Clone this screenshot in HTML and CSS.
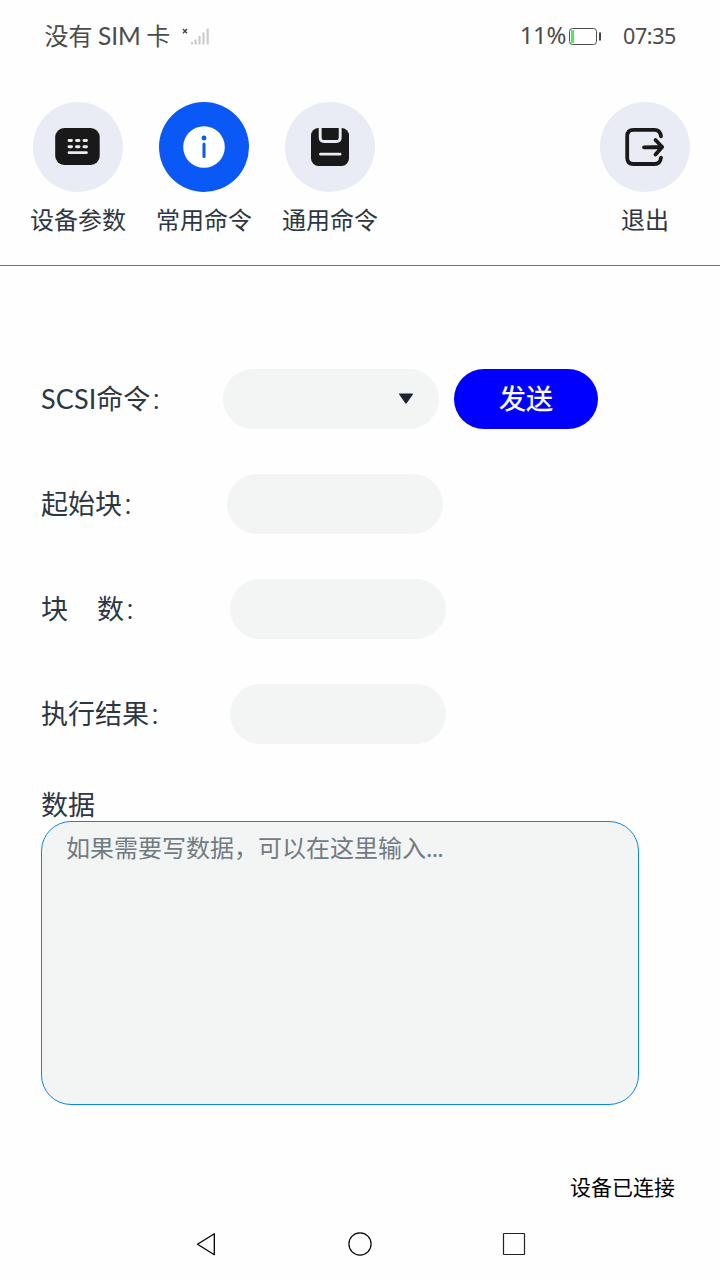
FILE: index.html
```
<!DOCTYPE html>
<html lang="zh-CN">
<head>
<meta charset="utf-8">
<title>常用命令</title>
<link rel="stylesheet" href="styles.css">
</head>
<body>
<div class="screen">
  <header class="status">
    <div class="carrier">没有 <span class="sim">SIM</span> 卡</div>
    <svg class="signal" width="29" height="20" viewBox="0 0 29 20">
      <path d="M1 2l4 4.200M5 2L1 6.200" stroke="#444" stroke-width="1.400"/>
      <path d="M10 15v2.500M13.600 12.500v5M17.500 9v8.500M21.500 5.500v12M25.700 1.500v16" stroke="#ccc" stroke-width="2.200"/>
    </svg>
    <div class="percent">11%</div>
    <svg class="battery" width="33" height="18" viewBox="0 0 33 18">
      <rect x=".5" y=".5" width="27" height="16" rx="3" fill="none" stroke="#4d4d4d"/>
      <path d="M2 2h3v13H2z" fill="#41ef5c"/>
      <path d="M31 4.500v8" stroke="#444" stroke-width="2"/>
    </svg>
    <time class="clock">07:35</time>
  </header>

  <nav class="tabs">
    <div class="tab">
      <div class="disc"><svg width="90" height="90" viewBox="0 0 90 90">
        <rect x="22.200" y="26" width="44.500" height="37" rx="9" fill="#191919"/>
        <path d="M36 38.500h2.500M43.500 38.500h2.500M51 38.500h2.500M36 44.700h2.500M43.500 44.700h2.500M51 44.700h2.500" stroke="#e9ecf5" stroke-width="2.900" stroke-linecap="round"/>
        <path d="M36 50.700h17.500" stroke="#e9ecf5" stroke-width="2.700" stroke-linecap="round"/>
      </svg></div>
      <span>设备参数</span>
    </div>
    <div class="tab active">
      <div class="disc"><svg width="90" height="90" viewBox="0 0 90 90">
        <circle cx="45" cy="45" r="20.800" fill="#fff"/>
        <circle cx="45" cy="36" r="2.400" fill="#0a59f7"/>
        <path d="M45 42v12.500" stroke="#0a59f7" stroke-width="3" stroke-linecap="round"/>
      </svg></div>
      <span>常用命令</span>
    </div>
    <div class="tab">
      <div class="disc"><svg width="90" height="90" viewBox="0 0 90 90">
        <rect x="26" y="26" width="38" height="38" rx="7.500" fill="#191919"/>
        <path d="M35.200 25.500v10q0 4 4 4h12q4 0 4-4v-10" fill="none" stroke="#e9ecf5" stroke-width="2.900"/>
        <path d="M35.500 52.200h19.500" stroke="#e9ecf5" stroke-width="2.800" stroke-linecap="round"/>
      </svg></div>
      <span>通用命令</span>
    </div>
    <div class="tab exit">
      <div class="disc"><svg width="90" height="90" viewBox="0 0 90 90" fill="none" stroke="#191919" stroke-width="3.800" stroke-linecap="round" stroke-linejoin="round">
        <path d="M61 34.300q-.8-6.500-6.500-6.500H33.500q-6.300 0-6.300 6.300v21.600q0 6.300 6.300 6.300h21q5.700 0 6.500-6.300"/>
        <path d="M44 45.300l18-.3M55.500 38l6.700 7-6.700 7.500"/>
      </svg></div>
      <span>退出</span>
    </div>
  </nav>

  <main class="form">
    <div class="row">
      <label class="label first"><span class="latin">SCSI</span>命令<span class="colon">：</span></label>
      <div class="field select"><svg width="16" height="11" viewBox="0 0 16 11"><path d="M1.500.5h13q1 0 .3 1L8.900 10q-.9 1-1.800 0L1.200 1.500q-.7-1 .3-1z" fill="#182431"/></svg></div>
      <button class="send">发送</button>
    </div>
    <div class="row"><label class="label second">起始块<span class="colon">：</span></label><div class="field"></div></div>
    <div class="row"><label class="label">块<span class="gap"></span>数<span class="colon">：</span></label><div class="field"></div></div>
    <div class="row"><label class="label">执行结果<span class="colon">：</span></label><div class="field"></div></div>
    <div class="data-label">数据</div>
    <div class="data">如果需要写数据，可以在这里输入<span class="dots">...</span></div>
  </main>

  <div class="connection">设备已连接</div>
  <footer class="navbar">
    <svg width="24" height="26" viewBox="0 0 24 26"><path d="M19.300 2.700v21L2.500 13.200z" fill="none" stroke="#000" stroke-width="1.300" stroke-linejoin="round"/></svg>
    <svg width="26" height="26" viewBox="0 0 26 26"><circle cx="13" cy="13" r="11.100" fill="none" stroke="#000" stroke-width="1.200"/></svg>
    <svg width="26" height="26" viewBox="0 0 26 26"><rect x="2.500" y="2.500" width="21" height="21" rx=".5" fill="none" stroke="#222" stroke-width="1.200"/></svg>
  </footer>
</div>
</body>
</html>
```
FILE: styles.css
```
* { box-sizing: border-box; }
body { margin: 0; background: #fefefe; font-family: "Noto Sans CJK SC", sans-serif; }
svg { display: block; flex: none; }
.screen { width: 720px; height: 1280px; display: flex; flex-direction: column; overflow: hidden; color: #2d3643; }
.status { height: 72px; display: flex; align-items: center; padding: 0 44px; color: #4b4b4b; font-size: 24px; line-height: 36px; white-space: nowrap; }
.carrier { width: 138px; margin-top: -2px; padding-left: .5px; }
.sim { font-family: Lato, sans-serif; font-size: 24.5px; }
.signal { margin-top: 1px; }
.percent { margin-left: auto; margin-right: 3px; margin-top: -2px; font-family: "Noto Sans", sans-serif; font-size: 24px; letter-spacing: -.4px; }
.battery { margin-top: 2px; }
.clock { width: 53px; margin-left: 21px; font-family: "Noto Sans", sans-serif; font-size: 21.5px; letter-spacing: -.4px; }
.tabs { height: 194px; padding: 30px 21px 0; display: flex; gap: 12px; border-bottom: 1px solid #767676; }
.tab { width: 114px; display: flex; flex-direction: column; align-items: center; font-size: 24px; line-height: 36px; white-space: nowrap; }
.tab span { margin-top: 9px; }
.disc { width: 90px; height: 90px; border-radius: 50%; background: #e9ecf5; }
.active .disc { background: #0a59f7; }
.exit { margin-left: auto; margin-right: -3px; }
.form { padding: 103px 81px 0 41px; font-size: 27px; }
.row { height: 60px; display: flex; align-items: center; margin-bottom: 45px; }
.label { width: 189px; height: 60px; line-height: 57px; white-space: nowrap; }
.first { width: 182px; }
.second { width: 186px; }
.latin { font-family: Lato, sans-serif; letter-spacing: .1px; }
.colon { font-size: 24px; font-weight: 300; }
.gap { display: inline-block; width: 29px; }
.field { width: 216px; height: 60px; border-radius: 30px; background: #f3f5f5; }
.select { display: flex; align-items: center; justify-content: flex-end; padding: 0 25px 1px 0; }
.send { width: 144px; height: 60px; margin-left: 15px; padding: 0 0 2px; border: 0; border-radius: 30px; background: #00f; color: #fff; font: 400 27px/58px "Noto Sans CJK SC", sans-serif; -webkit-text-stroke: .3px #fff; }
.data-label { height: 32px; line-height: 30px; }
.data { width: 598px; height: 284px; padding: 7px 24px 6px; border: 1px solid #0a84f5; border-radius: 30px; background: #f3f5f5; color: #727a82; font-size: 24px; line-height: 35px; }
.dots { font-family: "Noto Sans", sans-serif; letter-spacing: -.8px; }
.connection { margin: 65px 45px 0 auto; color: #000; font-size: 21px; line-height: 32px; }
.navbar { margin-top: auto; height: 72px; padding-left: 2px; display: flex; justify-content: center; gap: 128px; align-items: center; }
```
